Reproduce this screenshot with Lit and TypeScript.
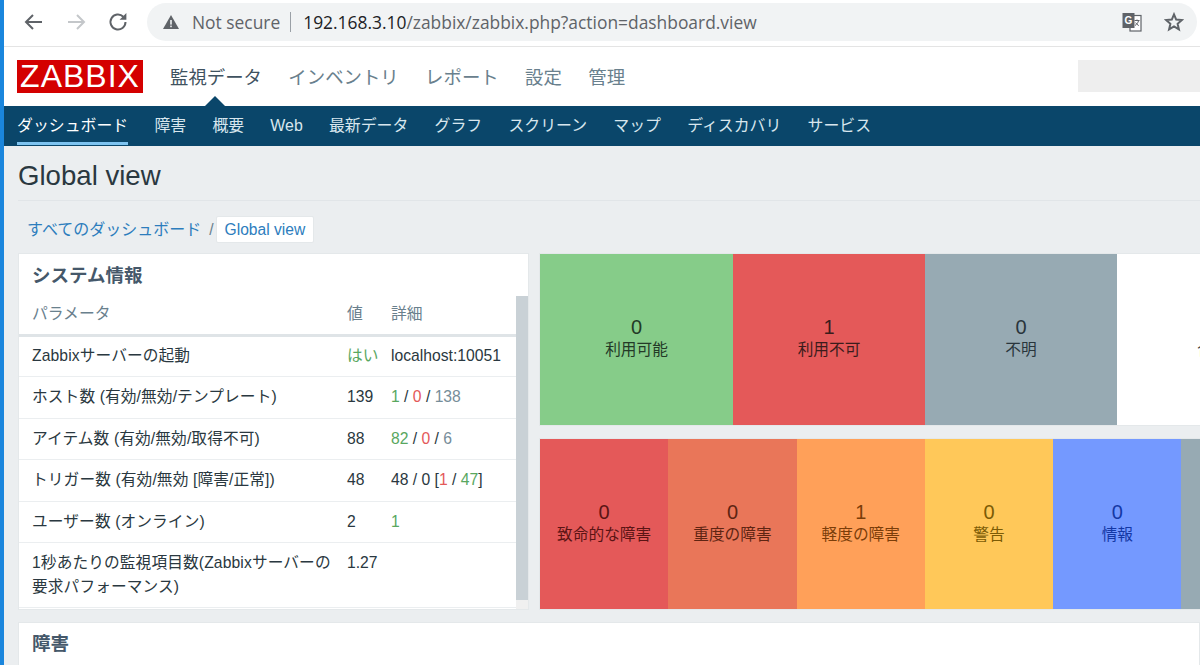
import { LitElement, html, css } from "lit";
import { customElement } from "lit/decorators.js";

const SANS = css`"Liberation Sans", "Noto Sans CJK JP", sans-serif`;

@customElement("app-root")
export class AppRoot extends LitElement {
  static styles = css`
    :host { display: block; width: 1200px; height: 665px; overflow: hidden; background: #ebeef0; border-left: 4px solid #1a86dd; box-sizing: border-box; font-family: ${SANS}; color: #2a3840; }
    * { box-sizing: border-box; }
    .toolbar { height: 47px; background: #fff; border-bottom: 1px solid #e4e4e4; display: flex; align-items: center; padding: 0 3px 3px 17px; }
    .nav-ic { width: 24px; height: 24px; flex: none; margin-right: 20px; }
    .nav-ic.mid { margin-right: 17px; }
    .nav-ic.last { margin-right: 17px; }
    .omni { flex: 1; height: 38px; border-radius: 19px; background: #f1f3f4; display: flex; align-items: center; padding: 0 13px 0 15px; font-family: "Open Sans", "Noto Sans", sans-serif; font-size: 17.4px; color: #5f6368; white-space: nowrap; }
    .warn { width: 18px; height: 18px; margin-right: 12px; flex: none; }
    .sep { width: 1px; height: 20px; background: #9aa0a6; margin: 0 12px 0 10px; }
    .url { color: #202124; }
    .url span { color: #5f6368; }
    .spacer { flex: 1; }
    .tr-ic { width: 22px; height: 22px; margin-right: 21px; }
    .star { width: 20px; height: 20px; }
    .head { height: 59px; background: #fff; display: flex; align-items: center; padding: 0 0 0 13px; }
    .logo { width: 126px; height: 33px; background: #d40000; color: #fff; font-size: 32px; letter-spacing: 1px; line-height: 33px; text-align: center; margin-right: 27px; }
    .menu { display: flex; gap: 26.4px; font-size: 18.4px; color: #69808d; margin-bottom: 2px; }
    .menu .on { color: #3f5260; }
    .search { margin-left: auto; margin-bottom: 2px; width: 122px; height: 32px; background: #eee; }
    .sub { height: 40px; background: #0a466a; display: flex; gap: 26.2px; padding-left: 13px; position: relative; font-size: 15.9px; color: #d8e6ee; }
    .sub div { height: 39px; line-height: 40px; white-space: nowrap; }
    .sub .on { color: #fff; border-bottom: 3px solid #7dc3f0; }
    .tip { position: absolute; left: 201px; top: -10px; width: 0; height: 0; border-left: 10px solid transparent; border-right: 10px solid transparent; border-bottom: 10px solid #0a466a; }
    .page { padding: 0 0 0 14px; }
    h1 { margin: 0; font-weight: 400; font-size: 27.6px; line-height: 60px; height: 55px; border-bottom: 1px solid #e1e5e8; color: #2a3840; }
    .crumbs { height: 52px; padding: 15px 0 0 9px; display: flex; align-items: flex-start; font-size: 15.6px; color: #2d7dbd; }
    .crumbs .a { line-height: 27px; font-size: 16px; }
    .crumbs .s { color: #69808d; margin: 0 2px 0 8px; line-height: 27px; }
    .crumbs .cur { background: #fff; border: 1px solid #e4e8ea; border-radius: 2px; height: 27px; line-height: 26px; padding: 0 8px; white-space: nowrap; }
    .grid { display: flex; gap: 10px; align-items: flex-start; }
    .panel { width: 511px; height: 357px; background: #fff; border: 1px solid #e4e8ea; flex: none; display: flex; flex-direction: column; }
    .p-title { height: 42px; padding: 10px 0 0 13px; font-size: 18.5px; font-weight: 700; line-height: 24px; color: #45586a; }
    .p-body { flex: 1; display: flex; min-height: 0; }
    table { width: 497px; border-collapse: collapse; table-layout: fixed; font-size: 15.7px; align-self: flex-start; color: #2a3840; }
    th { font-weight: 400; color: #69808d; text-align: left; height: 39px; padding: 0 0 4px 0; border-bottom: 3px solid #dfe4e7; font-size: 15.8px; }
    td { padding: 0; height: 41.5px; border-bottom: 1px solid #ebeef0; line-height: 24px; vertical-align: middle; white-space: nowrap; }
    tr.tall td { height: 65px; vertical-align: top; padding-top: 8px; }
    td:first-child, th:first-child { padding-left: 13px; }
    td:first-child { letter-spacing: 0.11px; }
    .g { color: #59a75f; } .r { color: #e45959; } .m { color: #768d99; }
    .track { width: 12px; background: #f0f0f0; display: flex; flex-direction: column; }
    .thumb { height: 304px; background: #c9d1d6; }
    .right { width: 661px; overflow: hidden; flex: none; display: flex; flex-direction: column; gap: 12px; }
    .row { display: flex; width: 900px; border: 1px solid #e4e8ea; border-right: 0; background: #fff; }
    .row.a { height: 173px; }
    .row.b { height: 172px; }
    .tile { flex: none; display: flex; flex-direction: column; align-items: center; justify-content: center; text-align: center; padding-bottom: 4px; white-space: nowrap; }
    .row.a .tile { width: 192px; }
    .row.a .tile:first-child { width: 193px; }
    .row.b .tile { width: 128.3px; }
    .num { font-size: 20px; line-height: 24px; }
    .lbl { font-size: 15.7px; line-height: 21px; }
    .lav { background: #86cc89; color: #233a27; }
    .una { background: #e45959; color: #3b1c1c; }
    .unk { background: #97aab3; color: #29353c; }
    .tot { background: #fff; color: #3a3a3a; }
    .dis { background: #e45959; color: #5a1414; }
    .hig { background: #e97659; color: #5e2412; }
    .avg { background: #ffa059; color: #7a3d09; }
    .wrn { background: #ffc859; color: #7c5b05; }
    .inf { background: #7499ff; color: #1438a5; }
    .nc { background: #97aab3; color: #29353c; }
    .problems { margin-top: 12px; height: 60px; background: #fff; border: 1px solid #e4e8ea; padding: 9px 0 0 13px; font-size: 18.5px; font-weight: 700; line-height: 24px; color: #45586a; }
  `;

  render() {
    return html`
      <div class="toolbar">
        <svg class="nav-ic" viewBox="0 0 24 24" fill="none" stroke="#5f6368" stroke-width="2"><path d="M21 12H5M12 5l-7 7 7 7"/></svg>
        <svg class="nav-ic mid" viewBox="0 0 24 24" fill="none" stroke="#c4c7ca" stroke-width="2"><path d="M3 12h16M12 5l7 7-7 7"/></svg>
        <svg class="nav-ic last" viewBox="0 0 24 24" fill="none" stroke="#5f6368" stroke-width="2"><path d="M19.5 12a7.5 7.5 0 1 1-2.2-5.3"/><path d="M20.4 3v6.8h-6.8" fill="#5f6368" stroke="none"/></svg>
        <div class="omni">
          <svg class="warn" viewBox="0 0 18 18"><path d="M9 2 17 16H1Z" fill="#5f6368"/><rect x="8.2" y="7" width="1.6" height="4.6" fill="#f1f3f4"/><rect x="8.2" y="12.6" width="1.6" height="1.6" fill="#f1f3f4"/></svg>
          <span>Not secure</span><span class="sep"></span>
          <span class="url">192.168.3.10<span>/zabbix/zabbix.php?action=dashboard.view</span></span>
          <span class="spacer"></span>
          <svg class="tr-ic" viewBox="0 0 22 22"><rect x="9" y="4.5" width="11" height="15.5" fill="#fff" stroke="#5f6368" stroke-width="1.2"/><path d="M1.5 2h12v15h-12z" fill="#5f6368"/><path d="M13.5 9.5h5M16 8.5v1M17.6 9.5c-.5 2.4-2 4-3.6 5M14.6 11.6c.8 1.3 1.8 2.2 3.2 3" stroke="#5f6368" fill="none" stroke-width="1"/><text x="7.5" y="13" font-size="10" font-weight="700" text-anchor="middle" fill="#fff" font-family="Liberation Sans, sans-serif">G</text></svg>
          <svg class="star" viewBox="0 0 20 20" fill="none" stroke="#5f6368" stroke-width="2"><path d="M10 2.4 12.2 7.6l5.6.5-4.2 3.7 1.3 5.5L10 14.3l-4.9 3 1.3-5.5L2.2 8.1l5.6-.5Z"/></svg>
        </div>
      </div>
      <div class="head">
        <div class="logo">ZABBIX</div>
        <div class="menu"><span class="on">監視データ</span><span>インベントリ</span><span>レポート</span><span>設定</span><span>管理</span></div>
        <div class="search"></div>
      </div>
      <div class="sub">
        <span class="tip"></span>
        <div class="on">ダッシュボード</div><div>障害</div><div>概要</div><div>Web</div><div>最新データ</div><div>グラフ</div><div>スクリーン</div><div>マップ</div><div>ディスカバリ</div><div>サービス</div>
      </div>
      <div class="page">
        <h1>Global view</h1>
        <div class="crumbs"><span class="a">すべてのダッシュボード</span><span class="s">/</span><span class="cur">Global view</span></div>
        <div class="grid">
          <div class="panel">
            <div class="p-title">システム情報</div>
            <div class="p-body">
              <table>
                <colgroup><col style="width:328px"/><col style="width:44px"/><col/></colgroup>
                <tr><th>パラメータ</th><th>値</th><th>詳細</th></tr>
                <tr><td>Zabbixサーバーの起動</td><td class="g">はい</td><td>localhost:10051</td></tr>
                <tr><td>ホスト数 (有効/無効/テンプレート)</td><td>139</td><td><span class="g">1</span> / <span class="r">0</span> / <span class="m">138</span></td></tr>
                <tr><td>アイテム数 (有効/無効/取得不可)</td><td>88</td><td><span class="g">82</span> / <span class="r">0</span> / <span class="m">6</span></td></tr>
                <tr><td>トリガー数 (有効/無効 [障害/正常])</td><td>48</td><td>48 / 0 [<span class="r">1</span> / <span class="g">47</span>]</td></tr>
                <tr><td>ユーザー数 (オンライン)</td><td>2</td><td><span class="g">1</span></td></tr>
                <tr class="tall"><td>1秒あたりの監視項目数(Zabbixサーバーの<br/>要求パフォーマンス)</td><td>1.27</td><td></td></tr>
              </table>
              <div class="track"><div class="thumb"></div></div>
            </div>
          </div>
          <div class="right">
            <div class="row a">
              <div class="tile lav"><div class="num">0</div><div class="lbl">利用可能</div></div>
              <div class="tile una"><div class="num">1</div><div class="lbl">利用不可</div></div>
              <div class="tile unk"><div class="num">0</div><div class="lbl">不明</div></div>
              <div class="tile tot"><div class="num">1</div><div class="lbl">合計</div></div>
            </div>
            <div class="row b">
              <div class="tile dis"><div class="num">0</div><div class="lbl">致命的な障害</div></div>
              <div class="tile hig"><div class="num">0</div><div class="lbl">重度の障害</div></div>
              <div class="tile avg"><div class="num">1</div><div class="lbl">軽度の障害</div></div>
              <div class="tile wrn"><div class="num">0</div><div class="lbl">警告</div></div>
              <div class="tile inf"><div class="num">0</div><div class="lbl">情報</div></div>
              <div class="tile nc"><div class="num">0</div><div class="lbl">未分類</div></div>
            </div>
          </div>
        </div>
        <div class="problems">障害</div>
      </div>
    `;
  }
}
